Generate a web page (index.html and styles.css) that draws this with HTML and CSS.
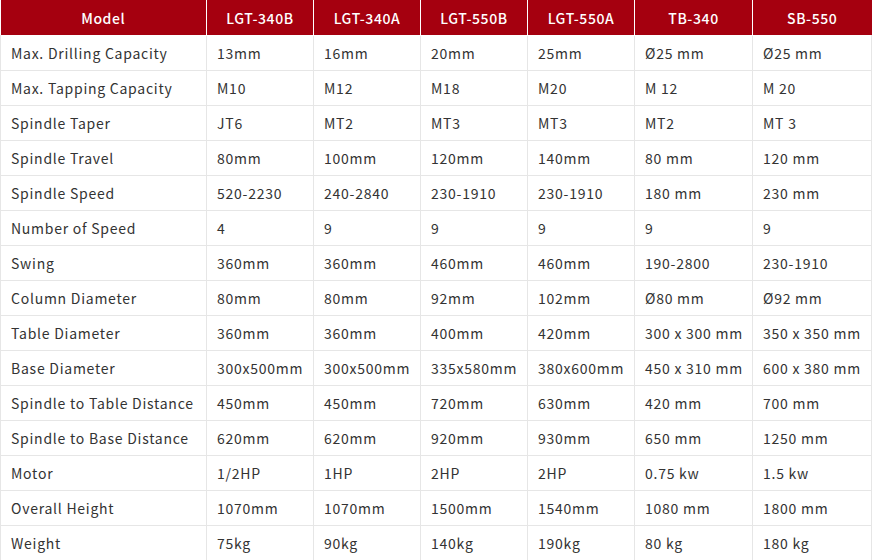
FILE: index.html
```html
<!DOCTYPE html>
<html>
<head>
<meta charset="utf-8">
<link rel="stylesheet" href="styles.css">
</head>
<body>
<table class="spec">
  <colgroup>
    <col class="c-label"><col class="c-mid"><col class="c-mid"><col class="c-mid"><col class="c-mid"><col class="c-wide"><col class="c-last">
  </colgroup>
  <thead>
    <tr><th>Model</th><th>LGT-340B</th><th>LGT-340A</th><th>LGT-550B</th><th>LGT-550A</th><th>TB-340</th><th>SB-550</th></tr>
  </thead>
  <tbody>
    <tr><td>Max. Drilling Capacity</td><td>13mm</td><td>16mm</td><td>20mm</td><td>25mm</td><td>Ø25 mm</td><td>Ø25 mm</td></tr>
    <tr><td>Max. Tapping Capacity</td><td>M10</td><td>M12</td><td>M18</td><td>M20</td><td>M 12</td><td>M 20</td></tr>
    <tr><td>Spindle Taper</td><td>JT6</td><td>MT2</td><td>MT3</td><td>MT3</td><td>MT2</td><td>MT 3</td></tr>
    <tr><td>Spindle Travel</td><td>80mm</td><td>100mm</td><td>120mm</td><td>140mm</td><td>80 mm</td><td>120 mm</td></tr>
    <tr><td>Spindle Speed</td><td>520-2230</td><td>240-2840</td><td>230-1910</td><td>230-1910</td><td>180 mm</td><td>230 mm</td></tr>
    <tr><td>Number of Speed</td><td>4</td><td>9</td><td>9</td><td>9</td><td>9</td><td>9</td></tr>
    <tr><td>Swing</td><td>360mm</td><td>360mm</td><td>460mm</td><td>460mm</td><td>190-2800</td><td>230-1910</td></tr>
    <tr><td>Column Diameter</td><td>80mm</td><td>80mm</td><td>92mm</td><td>102mm</td><td>Ø80 mm</td><td>Ø92 mm</td></tr>
    <tr><td>Table Diameter</td><td>360mm</td><td>360mm</td><td>400mm</td><td>420mm</td><td>300 x 300 mm</td><td>350 x 350 mm</td></tr>
    <tr><td>Base Diameter</td><td>300x500mm</td><td>300x500mm</td><td>335x580mm</td><td>380x600mm</td><td>450 x 310 mm</td><td>600 x 380 mm</td></tr>
    <tr><td>Spindle to Table Distance</td><td>450mm</td><td>450mm</td><td>720mm</td><td>630mm</td><td>420 mm</td><td>700 mm</td></tr>
    <tr><td>Spindle to Base Distance</td><td>620mm</td><td>620mm</td><td>920mm</td><td>930mm</td><td>650 mm</td><td>1250 mm</td></tr>
    <tr><td>Motor</td><td>1/2HP</td><td>1HP</td><td>2HP</td><td>2HP</td><td>0.75 kw</td><td>1.5 kw</td></tr>
    <tr><td>Overall Height</td><td>1070mm</td><td>1070mm</td><td>1500mm</td><td>1540mm</td><td>1080 mm</td><td>1800 mm</td></tr>
    <tr><td>Weight</td><td>75kg</td><td>90kg</td><td>140kg</td><td>190kg</td><td>80 kg</td><td>180 kg</td></tr>
  </tbody>
</table>
</body>
</html>
```

FILE: styles.css
```css
html, body {
  margin: 0;
  padding: 0;
  background: #fff;
}
body {
  font-family: "Noto Sans CJK SC", "Noto Sans", sans-serif;
  font-size: 14px;
  color: #333;
}
.spec {
  border-collapse: collapse;
  table-layout: fixed;
  width: 871px;
}
.c-label { width: 206px; }
.c-mid { width: 107px; }
.c-wide { width: 118px; }
.c-last { width: 119px; }
.spec th {
  background: #a5000f;
  color: #fff;
  font-weight: 500;
  height: 35px;
  padding: 0;
  text-align: center;
  letter-spacing: 0.6px;
  border: 1px solid #fff;
  border-top: none;
  border-bottom: none;
}
.spec th:first-child { border-left: none; }
.spec th:last-child { border-right: none; }
.spec td {
  height: 34px;
  padding: 0 0 0 10px;
  border: 1px solid #e6e6e6;
  letter-spacing: 0.75px;
  white-space: nowrap;
  line-height: 20px;
}
.spec tbody tr:first-child td { border-top: 1px solid #fff; }
```
